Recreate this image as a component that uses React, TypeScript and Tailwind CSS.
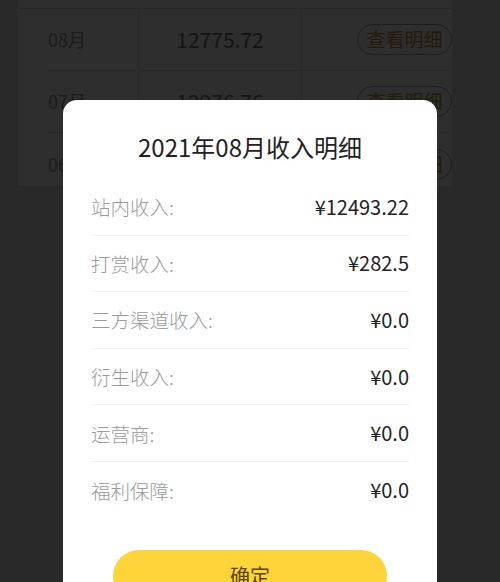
import React from "react";

const font = { fontFamily: '"Noto Sans CJK SC", "Noto Sans", sans-serif' };

const bgRows = [
  { m: "08月", v: "12775.72" },
  { m: "07月", v: "12976.76" },
  { m: "06月", v: "12613.40" },
];

const items = [
  { k: "站内收入:", v: "¥12493.22" },
  { k: "打赏收入:", v: "¥282.5" },
  { k: "三方渠道收入:", v: "¥0.0" },
  { k: "衍生收入:", v: "¥0.0" },
  { k: "运营商:", v: "¥0.0" },
  { k: "福利保障:", v: "¥0.0" },
];

export default function App() {
  return (
    <div className="relative w-[500px] h-[582px] overflow-hidden bg-[#292929]" style={font}>
      {/* background table (dimmed) */}
      <div className="ml-[18px] w-[434px] h-[186px] overflow-hidden bg-[#2e2e2e] pt-[8px]">
        <div className="border-t border-[#272727]">
          {bgRows.map((r, i) => (
            <div key={i} className="flex h-[62px]">
              <div className="w-[120px] h-full pl-[30px] pr-[2px]">
                <div className={`h-full flex items-center text-[18px] text-[#1c1c1c] ${i < 2 ? "border-b border-[#272727]" : ""}`}>
                  {r.m}
                </div>
              </div>
              <div className={`w-[164px] h-full border-l border-r border-[#282828] flex items-center justify-center text-[21px] text-[#141414] ${i < 2 ? "border-b" : ""}`}>
                {r.v}
              </div>
              <div className={`flex-1 h-full flex items-center justify-end ${i < 2 ? "border-b border-[#2a2a2a]" : ""}`}>
                <div className="h-[31px] w-[95px] rounded-full border border-[#1d1d1d] flex items-center justify-center text-[19px] text-[#231a0a]">
                  查看明细
                </div>
              </div>
            </div>
          ))}
        </div>
      </div>

      {/* modal */}
      <div className="absolute left-[63px] top-[100px] w-[374px] h-[520px] bg-white rounded-[14px]">
        <div className="pt-[31px] text-center text-[24px] leading-[32px] text-[#222]">
          2021年08月收入明细
        </div>
        <div className="mt-[16px] px-[28px]">
          {items.map((it, i) => (
            <div
              key={i}
              className={`h-[56.6px] flex items-center justify-between ${i < items.length - 1 ? "border-b border-[#efefef]" : ""}`}
            >
              <span className="text-[19.5px] font-light text-[#9a9a9a]">{it.k}</span>
              <span className="text-[20px] text-[#222]">{it.v}</span>
            </div>
          ))}
        </div>
        <div className="mt-[31px] flex justify-center">
          <div className="w-[274px] h-[52px] rounded-full bg-[#fdd53a] flex items-center justify-center text-[20px] text-[#5b4308]">
            确定
          </div>
        </div>
      </div>
    </div>
  );
}
